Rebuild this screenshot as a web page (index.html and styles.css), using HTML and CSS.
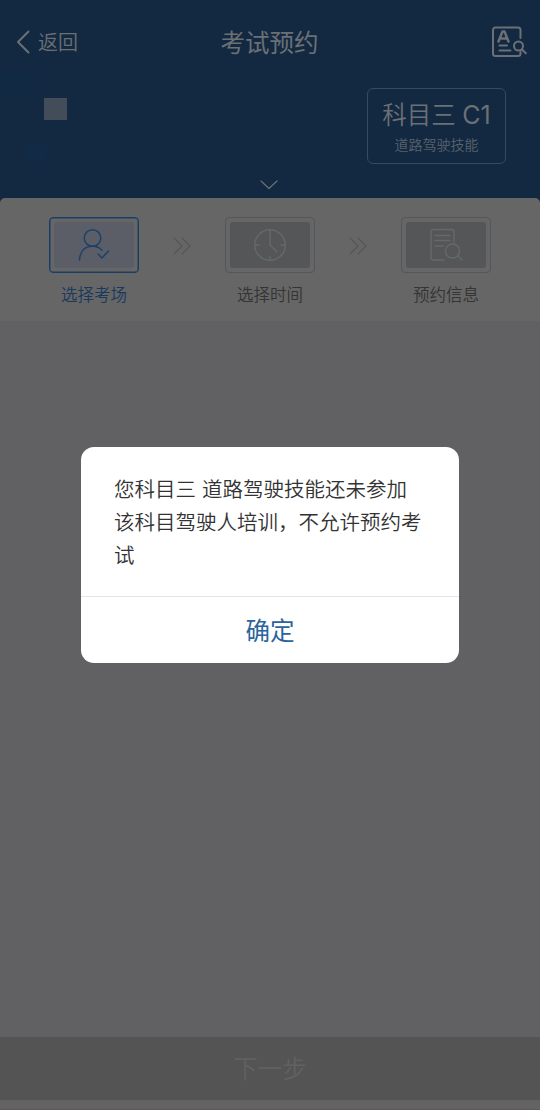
FILE: index.html
```html
<!DOCTYPE html>
<html lang="zh-CN">
<head>
<meta charset="utf-8">
<title>考试预约</title>
<link rel="stylesheet" href="styles.css">
</head>
<body>
<div class="app">
  <header class="header">
    <nav class="navbar">
      <div class="back">
        <svg class="back-icon" width="14" height="24" viewBox="0 0 14 24"><path d="M12.500 1.500 2 12l10.500 10.500"/></svg>
        <span>返回</span>
      </div>
      <h1 class="title">考试预约</h1>
      <svg class="record-icon" width="36" height="32" viewBox="0 0 36 32">
        <path d="M29.500 12V4a2.500 2.500 0 0 0-2.500-2.500H4.500A2.500 2.500 0 0 0 2 4v23.500A2.500 2.500 0 0 0 4.500 30H27a2.500 2.500 0 0 0 2.500-2.500V26"/>
        <path class="letter" d="M7.500 15.500 11.500 5.500h2l4 10M9.500 12.500h6.500"/>
        <path d="M8.500 19.500h7.500M8.500 24.500h11"/>
        <circle cx="27.500" cy="20" r="4.500"/>
        <path d="m31 23.500 3.800 3.800"/>
      </svg>
    </nav>
    <div class="profile">
      <span class="avatar"></span>
      <div class="subject">
        <div class="subject-name">科目三 <span class="license">C1</span></div>
        <div class="subject-desc">道路驾驶技能</div>
      </div>
    </div>
    <svg class="expand" width="18" height="10" viewBox="0 0 18 10"><path d="m1 1 8 7.500L17 1"/></svg>
  </header>
  <section class="steps">
    <div class="step active">
      <div class="frame"><div class="tile">
        <svg width="34" height="36" viewBox="0 0 34 36"><circle cx="15.500" cy="11" r="8.300"/><path d="M2.500 33C3 24 8 19.300 15.500 19.300c4 0 7 1.200 9.500 4M21 27l4 4 6.500-7"/></svg>
      </div></div>
      <div class="label">选择考场</div>
    </div>
    <svg class="arrows" width="18" height="18" viewBox="0 0 18 18"><path d="m1 1 8 8-8 8M9 1l8 8-8 8"/></svg>
    <div class="step">
      <div class="frame"><div class="tile">
        <svg width="34" height="36" viewBox="0 0 34 36"><circle cx="17" cy="18" r="15.300"/><path d="M17 3v15l7 7M17 29v4M2 18h4M28 18h4"/></svg>
      </div></div>
      <div class="label">选择时间</div>
    </div>
    <svg class="arrows" width="18" height="18" viewBox="0 0 18 18"><path d="m1 1 8 8-8 8M9 1l8 8-8 8"/></svg>
    <div class="step">
      <div class="frame"><div class="tile">
        <svg width="34" height="36" viewBox="0 0 34 36"><path d="M25 15V5a2.500 2.500 0 0 0-2.500-2.500h-18A2.500 2.500 0 0 0 2 5v25.500A2.500 2.500 0 0 0 4.500 33H15M6 8.500h15M6 13.500h15M6 19h8"/><circle cx="23.500" cy="24" r="7"/><path d="m28.500 28.500 4.500 4.500"/></svg>
      </div></div>
      <div class="label">预约信息</div>
    </div>
  </section>
  <main class="content">
    <div class="dialog" role="dialog">
      <p class="message">您科目三 道路驾驶技能还未参加<br>该科目驾驶人培训，不允许预约考<br>试</p>
      <div class="confirm">确定</div>
    </div>
  </main>
  <footer class="next">下一步</footer>
  <div class="system-bar"></div>
</div>
</body>
</html>
```
FILE: styles.css
```css
* { box-sizing: border-box; }
body {
  margin: 0;
  font-family: "Noto Sans CJK SC", sans-serif;
  font-weight: 350;
}
svg { fill: none; stroke-linecap: round; stroke-linejoin: round; flex: none; }
.app {
  width: 540px;
  height: 1110px;
  display: flex;
  flex-direction: column;
  background: #616163;
  overflow: hidden;
}
.header {
  height: 198px;
  flex: none;
  display: flex;
  flex-direction: column;
  background:
    radial-gradient(ellipse at center, #112b47 20%, transparent 75%) 20px 140px / 30px 24px no-repeat,
    linear-gradient(90deg, #10294280, #10294280) 0 72px / 44px 26px no-repeat,
    #132942;
  color: #6b7075;
}
.navbar {
  height: 84px;
  padding: 0 13px 0 16px;
  display: grid;
  grid-template-columns: 1fr auto 1fr;
  align-items: center;
}
.back {
  display: flex;
  align-items: center;
  gap: 8px;
  font-size: 20px;
  line-height: 28px;
}
.back-icon { stroke: #6b7075; stroke-width: 2; }
.title {
  margin: 0 0 0 -4px;
  font-size: 24.500px;
  line-height: 34px;
  font-weight: 400;
}
.record-icon { justify-self: end; stroke: #6b7075; stroke-width: 2; }
.record-icon .letter { stroke-width: 2.500; }
.profile {
  height: 80px;
  padding: 4px 34px 0 44px;
  display: flex;
  justify-content: space-between;
  align-items: flex-start;
}
.avatar {
  width: 23px;
  height: 22px;
  margin-top: 10px;
  background: #424d59;
}
.subject {
  width: 139px;
  height: 76px;
  padding-top: 8px;
  border: 1px solid #3a495b;
  border-radius: 6px;
  text-align: center;
}
.subject-name { font-size: 24.500px; line-height: 34px; }
.license { margin-left: 1px; font-family: Inter, sans-serif; font-size: 25px; font-weight: 400; line-height: 1; }
.subject-desc { font-size: 14px; line-height: 20px; margin-top: 3px; color: #5a626b; }
.expand { margin: 16px 0 0 260px; stroke: #6b7075; stroke-width: 1.200; }
.steps {
  height: 123px;
  flex: none;
  padding: 19px 49px 0;
  display: flex;
  justify-content: space-between;
  background: linear-gradient(#132942, #132942) top / 100% 5px no-repeat;
  position: relative;
  isolation: isolate;
}
.steps::before {
  content: "";
  position: absolute;
  inset: 0;
  z-index: -1;
  background: #666;
  border-radius: 5px 5px 0 0;
}
.step { width: 90px; color: #343434; }
.frame {
  height: 56px;
  padding: 4px;
  border: 1px solid #545657;
  border-radius: 4px;
}
.tile {
  height: 100%;
  display: flex;
  align-items: center;
  justify-content: center;
  border-radius: 3px;
  background: #545657;
}
.tile svg { stroke: #66696b; stroke-width: 1.400; }
.label {
  margin-top: 9px;
  font-size: 16.500px;
  line-height: 24px;
  text-align: center;
}
.active { color: #18395d; }
.active .frame { border-color: #193f67; box-shadow: inset 0 0 0 .5px #193f67; }
.active .tile { background: #5b5e66; }
.active .tile svg { stroke: #1b416a; stroke-width: 1.500; }
.arrows { margin-top: 20px; stroke: #535658; stroke-width: 1.200; }
.content {
  flex: 1;
  padding-top: 126px;
  display: flex;
  flex-direction: column;
  align-items: center;
}
.dialog {
  width: 378px;
  height: 216px;
  display: flex;
  flex-direction: column;
  background: #fff;
  border-radius: 13px;
}
.message {
  height: 149px;
  margin: 0;
  padding: 25px 0 0 33px;
  font-size: 20.500px;
  line-height: 33px;
  word-spacing: 1.500px;
  white-space: nowrap;
  color: #333;
}
.confirm {
  flex: 1;
  display: flex;
  align-items: center;
  justify-content: center;
  padding-bottom: 2px;
  border-top: 1px solid #e4e4e4;
  font-size: 24.500px;
  font-weight: 400;
  color: #2b639c;
}
.next {
  height: 63px;
  flex: none;
  display: flex;
  align-items: center;
  justify-content: center;
  padding-bottom: 2px;
  background: #545454;
  color: #616161;
  font-size: 24.500px;
}
.system-bar { height: 10px; flex: none; background: #636363; border-bottom: 1px solid #625458; }
```
